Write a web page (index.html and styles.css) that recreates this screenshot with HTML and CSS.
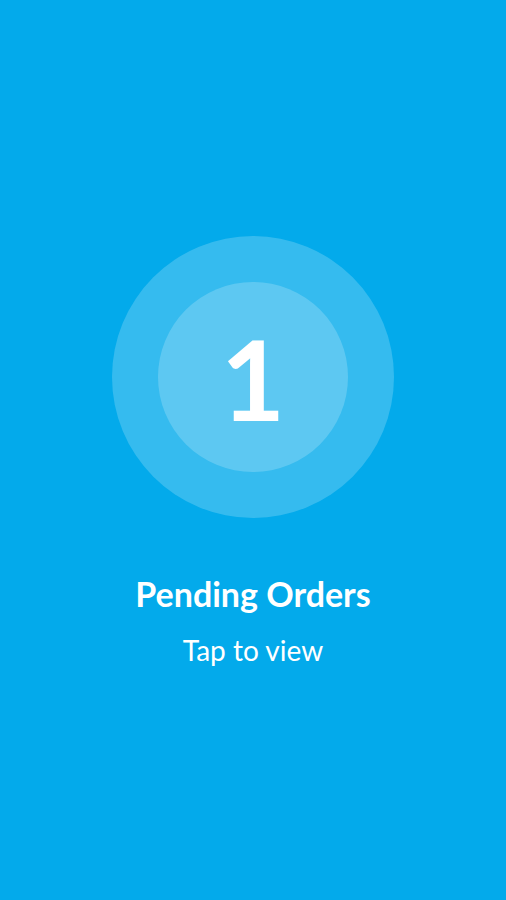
FILE: index.html
```html
<!DOCTYPE html>
<html>
<head>
<meta charset="utf-8">
<link rel="stylesheet" href="styles.css">
</head>
<body>
<main class="screen">
  <div class="ring-outer">
    <div class="ring-inner">
      <span class="count">1</span>
    </div>
  </div>
  <h1 class="title">Pending Orders</h1>
  <p class="subtitle">Tap to view</p>
</main>
</body>
</html>
```
FILE: styles.css
```css
html, body {
  margin: 0;
  padding: 0;
}
body {
  background: #03aaeb;
  font-family: Lato, "Open Sans", sans-serif;
  color: #fff;
}
.screen {
  height: 900px;
  display: flex;
  flex-direction: column;
  align-items: center;
  padding-top: 236px;
  box-sizing: border-box;
}
.ring-outer {
  width: 282px;
  height: 282px;
  border-radius: 50%;
  background: rgba(255, 255, 255, 0.2);
  display: flex;
  align-items: center;
  justify-content: center;
}
.ring-inner {
  width: 190px;
  height: 190px;
  border-radius: 50%;
  background: rgba(255, 255, 255, 0.2);
  display: flex;
  align-items: center;
  justify-content: center;
}
.count {
  font-size: 111px;
  font-weight: 700;
  line-height: 1;
  margin-top: 2px;
}
.title {
  margin: 56px 0 0;
  font-size: 34px;
  font-weight: 700;
  line-height: 40px;
}
.subtitle {
  margin: 19px 0 0;
  font-size: 28px;
  font-weight: 400;
  line-height: 34px;
}
```
